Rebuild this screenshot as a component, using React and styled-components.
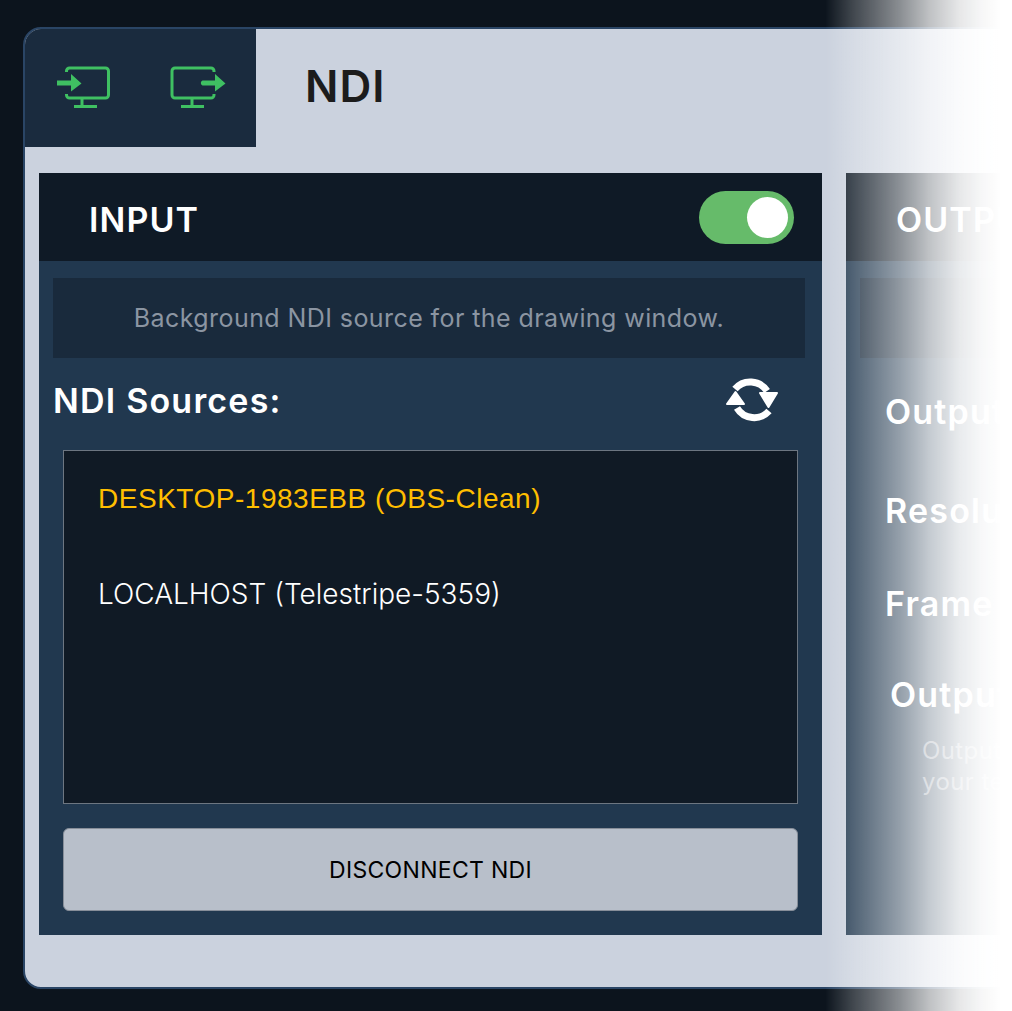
import React from 'react';
import styled, { createGlobalStyle } from 'styled-components';

const GlobalStyle = createGlobalStyle`
  html, body {
    margin: 0;
    height: 100%;
    overflow: hidden;
    background: #0c141d;
  }
  * {
    box-sizing: border-box;
  }
`;

const Page = styled.div`
  width: 1012px;
  height: 1011px;
  padding: 27px 0 0 23px;
  overflow: hidden;
  font-family: 'Inter', 'Liberation Sans', sans-serif;
`;
const Fade = styled.div`
  position: fixed;
  top: 0;
  left: 825px;
  width: 187px;
  height: 1011px;
  background: linear-gradient(
    90deg,
    rgba(255, 255, 255, 0) 0%,
    rgba(255, 255, 255, 0.22) 15%,
    rgba(255, 255, 255, 0.52) 40%,
    rgba(255, 255, 255, 0.74) 56%,
    rgba(255, 255, 255, 0.9) 72%,
    rgba(255, 255, 255, 0.97) 84%,
    #fff 94%
  );
  pointer-events: none;
`;
const Window = styled.div`
  width: 1640px;
  height: 962px;
  background-color: #cbd2de;
  border: 2px solid #2a4565;
  border-radius: 18px;
  overflow: hidden;
`;
const TopBar = styled.div`
  display: flex;
  align-items: center;
  height: 118px;
`;
const Tabs = styled.div`
  display: flex;
  align-items: flex-start;
  gap: 59px;
  width: 231px;
  height: 118px;
  padding: 33px 0 0 30px;
  background-color: #1a2b3e;
`;
const Title = styled.h1`
  margin: 0 0 4px 49px;
  font-size: 44px;
  font-weight: 600;
  letter-spacing: 1px;
  color: #1c1c1c;
`;
const Panels = styled.div`
  display: flex;
  gap: 24px;
  padding: 26px 0 0 14px;
`;
const Panel = styled.section`
  flex: none;
  width: 783px;
  height: 762px;
  background-color: #21384f;
`;
const PanelHeader = styled.div`
  display: flex;
  align-items: center;
  justify-content: space-between;
  height: 88px;
  padding: 0 28px 0 50px;
  background-color: #0f1a26;
`;
const PanelTitle = styled.h2`
  margin: 4px 0 0;
  font-size: 34px;
  font-weight: 600;
  letter-spacing: 1.1px;
  color: #fff;
`;
const Toggle = styled.div`
  display: flex;
  align-items: center;
  justify-content: flex-end;
  width: 95px;
  height: 53px;
  padding-right: 6px;
  border-radius: 27px;
  background-color: #66bb6a;
`;
const Knob = styled.div`
  width: 41px;
  height: 41px;
  border-radius: 50%;
  background-color: #fff;
`;
const PanelBody = styled.div`
  padding: 17px 17px 0 14px;
`;
const InfoBox = styled.div`
  display: flex;
  align-items: center;
  justify-content: center;
  height: 80px;
  font-size: 25px;
  letter-spacing: 0.42px;
  color: #8b95a2;
  background-color: #192a3c;
`;
const SourcesRow = styled.div`
  display: flex;
  align-items: center;
  justify-content: space-between;
  height: 92px;
  padding: 0 27px 8px 0;
`;
const SourcesLabel = styled.h3`
  margin: 0;
  font-size: 34px;
  font-weight: 600;
  letter-spacing: 1.2px;
  color: #fff;
`;
const SourceList = styled.ul`
  height: 354px;
  margin: 0 7px 0 10px;
  padding: 0;
  list-style: none;
  background-color: #101a25;
  border: 1px solid #6d7681;
`;
const SourceItem = styled.li`
  display: flex;
  align-items: center;
  height: 95px;
  padding-left: 34px;
  font-family: ${(p) => (p.$active ? "'Liberation Sans', sans-serif" : 'inherit')};
  font-size: 28px;
  font-weight: ${(p) => (p.$active ? 400 : 300)};
  letter-spacing: ${(p) => (p.$active ? '0.52px' : '0')};
  color: ${(p) => (p.$active ? '#ffbe00' : '#fff')};
`;
const DisconnectButton = styled.button`
  display: block;
  width: 735px;
  height: 83px;
  margin: 24px 0 0 10px;
  font-family: inherit;
  font-size: 23px;
  letter-spacing: 0.3px;
  color: #000;
  background-color: #b8bfca;
  border: 1px solid #878e99;
  border-radius: 6px;
`;
const OutputLabel = styled.div`
  height: 40px;
  margin-top: ${(p) => p.$top}px;
  margin-left: ${(p) => p.$left}px;
  font-size: 34px;
  font-weight: 600;
  letter-spacing: 1.2px;
  line-height: 40px;
  color: #fff;
`;
const OutputNote = styled.p`
  margin: 20px 0 0 62px;
  font-size: 24px;
  letter-spacing: 0.4px;
  line-height: 31px;
  color: #8b95a2;
`;

const InputIcon = () => (
  <svg width="56" height="50" viewBox="0 0 56 50" fill="none">
    <path
      d="M11.500 10V9a3 3 0 0 1 3-3h36a3 3 0 0 1 3 3v24a3 3 0 0 1-3 3h-36a3 3 0 0 1-3-3v-1"
      stroke="#3fc062"
      strokeWidth="3"
    />
    <path d="M27 37v7M19 44.500h23" stroke="#3fc062" strokeWidth="3" />
    <path d="M2 18.500h14v-6.500l10.500 9.500-10.500 8v-6h-14z" fill="#3fc062" />
  </svg>
);

const OutputIcon = () => (
  <svg width="56" height="50" viewBox="0 0 56 50" fill="none">
    <path
      d="M44 10V9a3 3 0 0 0-3-3H5a3 3 0 0 0-3 3v24a3 3 0 0 0 3 3h36a3 3 0 0 0 3-3v-1"
      stroke="#3fc062"
      strokeWidth="3"
    />
    <path d="M22 37v7M11 44.500h23" stroke="#3fc062" strokeWidth="3" />
    <path d="M32.500 18.500h12.500v-6.500l10.500 9.500-10.500 8v-6h-12.500a2.700 2.700 0 0 1 0-5z" fill="#3fc062" />
  </svg>
);

const RefreshIcon = () => (
  <svg width="52" height="46" viewBox="726 377 52 46" fill="none">
    <path d="M735 389a20 20 0 0 1 32 2" stroke="#fff" strokeWidth="7" />
    <path d="M769 411a20 20 0 0 1-32-3" stroke="#fff" strokeWidth="7" />
    <path d="M760 393h17l-8.500 14z" fill="#fff" stroke="#fff" strokeWidth="2" strokeLinejoin="round" />
    <path d="M727 404h17l-8.500-12z" fill="#fff" stroke="#fff" strokeWidth="2" strokeLinejoin="round" />
  </svg>
);

const App = () => {
  return (
    <Page>
      <GlobalStyle />
      <Window>
        <TopBar>
          <Tabs>
            <InputIcon />
            <OutputIcon />
          </Tabs>
          <Title>NDI</Title>
        </TopBar>
        <Panels>
          <Panel>
            <PanelHeader>
              <PanelTitle>INPUT</PanelTitle>
              <Toggle>
                <Knob />
              </Toggle>
            </PanelHeader>
            <PanelBody>
              <InfoBox>Background NDI source for the drawing window.</InfoBox>
              <SourcesRow>
                <SourcesLabel>NDI Sources:</SourcesLabel>
                <RefreshIcon />
              </SourcesRow>
              <SourceList>
                <SourceItem $active>DESKTOP-1983EBB (OBS-Clean)</SourceItem>
                <SourceItem>LOCALHOST (Telestripe-5359)</SourceItem>
              </SourceList>
              <DisconnectButton>DISCONNECT NDI</DisconnectButton>
            </PanelBody>
          </Panel>
          <Panel>
            <PanelHeader>
              <PanelTitle>OUTPUT</PanelTitle>
            </PanelHeader>
            <PanelBody>
              <InfoBox />
              <OutputLabel $top={34} $left={25}>Output</OutputLabel>
              <OutputLabel $top={59} $left={25}>Resolution</OutputLabel>
              <OutputLabel $top={53} $left={25}>Frame rate</OutputLabel>
              <OutputLabel $top={51} $left={30}>Output</OutputLabel>
              <OutputNote>
                Output stream of
                <br />
                your telestration
              </OutputNote>
            </PanelBody>
          </Panel>
        </Panels>
      </Window>
      <Fade />
    </Page>
  );
};

export default App;
